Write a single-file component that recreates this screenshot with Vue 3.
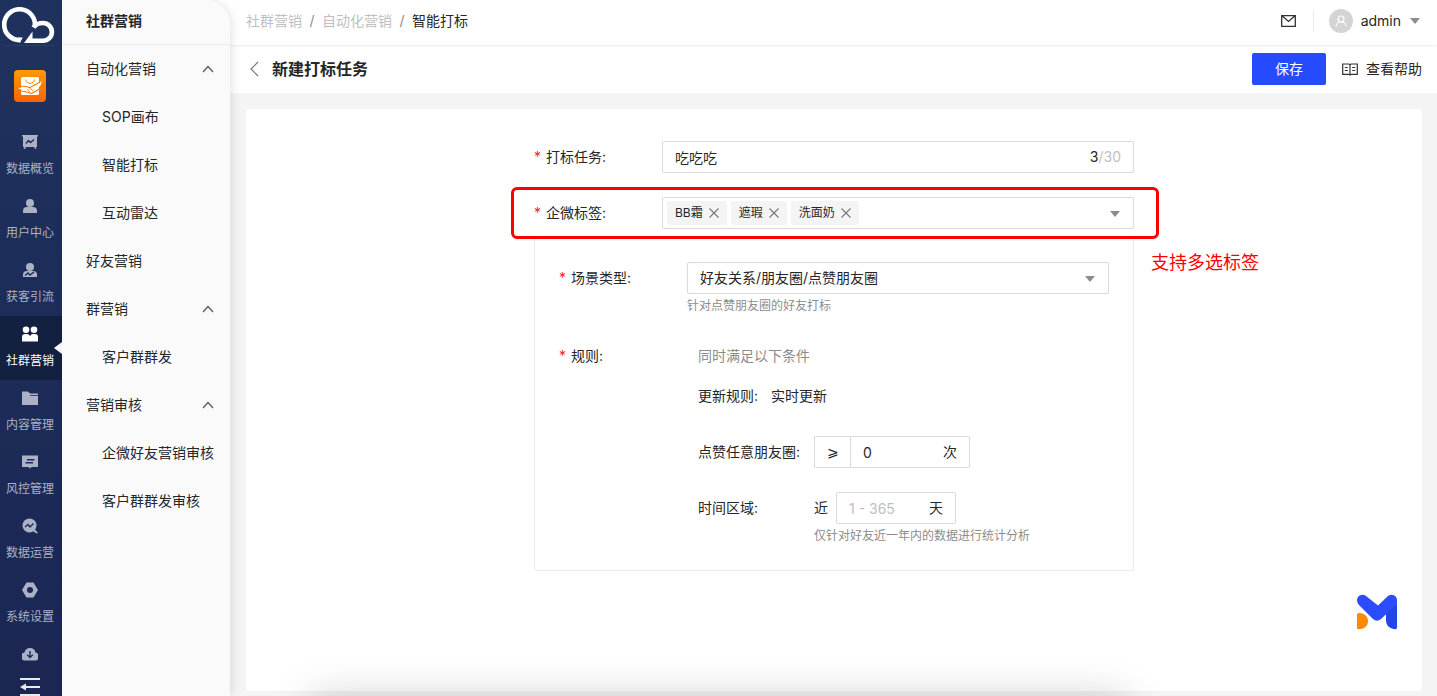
<script setup>
import { ref } from 'vue'

const navItems = [
  { key: 'overview', label: '数据概览' },
  { key: 'user', label: '用户中心' },
  { key: 'acquire', label: '获客引流' },
  { key: 'community', label: '社群营销', active: true },
  { key: 'content', label: '内容管理' },
  { key: 'risk', label: '风控管理' },
  { key: 'operation', label: '数据运营' },
  { key: 'setting', label: '系统设置' },
  { key: 'download', label: '' },
]

const menu = [
  { label: '自动化营销', children: ['SOP画布', '智能打标', '互动雷达'] },
  { label: '好友营销' },
  { label: '群营销', children: ['客户群群发'] },
  { label: '营销审核', children: ['企微好友营销审核', '客户群群发审核'] },
]

const taskName = ref('吃吃吃')
const tags = ref(['BB霜', '遮瑕', '洗面奶'])
const scene = ref('好友关系/朋友圈/点赞朋友圈')
const likes = ref('0')
const days = ref('')

const removeTag = (tag) => {
  tags.value = tags.value.filter((t) => t !== tag)
}
</script>

<template>
  <div class="app">
    <nav class="rail">
      <div class="brand">
        <svg width="58" height="46" viewBox="0 0 58 46" fill="none">
          <path d="M20.500 40A15.400 15.400 0 1 1 34.800 27" stroke="#fff" stroke-width="4.600" />
          <path d="M33.500 27.500C36 23.800 39.500 23 43 23A8.900 8.900 0 0 1 43 40.800H28" stroke="#fff" stroke-width="4.600" />
          <path d="M24 43.100L32.500 31.500V43.100Z" fill="#fff" />
          <path d="M16 42L18 37.600L22.800 37.600L20 42.500Z" fill="#fff" />
        </svg>
      </div>
      <a class="workspace" href="#" aria-label="工作台">
        <svg width="32" height="32" viewBox="0 0 32 32">
          <defs>
            <linearGradient id="ws" x1="0" y1="0" x2="0" y2="1">
              <stop offset="0" stop-color="#ff9a05" />
              <stop offset="1" stop-color="#ff6200" />
            </linearGradient>
          </defs>
          <rect width="32" height="32" rx="4" fill="url(#ws)" />
          <path d="M8.500 7H23.500Q25 7 25 8.500V23.500Q25 25 23.500 25H8.500Q7 25 7 23.500V8.500Q7 7 8.500 7Z" fill="#fff" />
          <path d="M11.500 9.500C12 14.500 20 14.500 20.500 9.500" fill="none" stroke="#ff8500" stroke-width="1" />
          <path d="M5 16.200C10 16.500 13 15.500 16 18C19 15 24 14.500 26 11.500M5 20.500C10 22 13 21 17 23.500C21 22 25 20 27 17" fill="none" stroke="#ff7a00" stroke-width="1.200" />
          <path d="M4 18C8 17.800 12 16.500 16 18.500C19 15.500 25 15.500 27.500 10.500C28 16.500 23 19 18 22C14 20 8 20.500 4 18Z" fill="#fff" />
          <path d="M13 19L16 21.500M15.500 18L19.500 21" stroke="#ff7500" stroke-width=".8" />
        </svg>
      </a>
      <a v-for="item in navItems" :key="item.key" href="#" class="nav-item" :class="{ active: item.active }">
        <svg width="16" height="16" viewBox="0 0 16 16" fill="currentColor">
          <template v-if="item.key === 'overview'">
            <path d="M0 1H16V2.500H15V13H13.500L14.500 15H13L12 13H4L3 15H1.500L2.500 13H1V2.500H0Z" />
            <path class="cut" d="M4 9.500L6.500 6.500L8.500 8.500L12 5.500" />
          </template>
          <template v-else-if="item.key === 'user'">
            <circle cx="8" cy="5" r="4" />
            <path d="M1 15V13Q1 9 5 9H11Q15 9 15 13V15Z" />
          </template>
          <template v-else-if="item.key === 'acquire'">
            <circle cx="8" cy="5" r="4" />
            <path d="M1 15V13Q1 9 5 9H11Q15 9 15 13V15Z" />
            <path class="cut" d="M3 13.500L6 11L8 13L12 10" />
          </template>
          <template v-else-if="item.key === 'community'">
            <circle cx="4" cy="3.800" r="3.300" />
            <circle cx="12" cy="3.800" r="3.300" />
            <path d="M0 15.500V11Q0 8 3 8H5Q7 8 8 10Q9 8 11 8H13Q16 8 16 11V15.500Z" />
          </template>
          <template v-else-if="item.key === 'content'">
            <path d="M0 1.500H6L8 3.500H16V15H0Z" />
            <path d="M8 5.500H16" stroke="#1d2c5b" stroke-width=".8" />
          </template>
          <template v-else-if="item.key === 'risk'">
            <path d="M0 1.500H16V13H9.500L8 14.500L6.500 13H0Z" />
            <path class="cut" d="M5 5.800H12.500M3.500 8.800H11" />
          </template>
          <template v-else-if="item.key === 'operation'">
            <circle cx="7.500" cy="7.500" r="7" />
            <path d="M11 13L13 11.500L16 15L14.500 15.500Z" />
            <path class="cut" d="M3 9L6 6.500L8 9L11.500 5.500" />
          </template>
          <template v-else-if="item.key === 'setting'">
            <path d="M4.500 .5H11.500L16 8L11.500 15.500H4.500L0 8Z" />
            <circle cx="8" cy="8" r="3" fill="#1b2855" />
          </template>
          <template v-else>
            <path d="M4 14.500A4 4 0 0 1 2.500 6.500A5.600 5.600 0 0 1 13.500 6.500A4 4 0 0 1 12 14.500Z" />
            <path class="cut" d="M8 5V11.500M5.200 8.800L8 11.500L10.800 8.800" />
          </template>
        </svg>
        <span>{{ item.label }}</span>
      </a>
      <button class="collapse" aria-label="收起">
        <svg width="20" height="18" viewBox="0 0 20 18" fill="#e8eaf0">
          <path d="M0 0H20V2H0ZM0 16H20V18H0ZM0 9L6 5.500V8H20V10H6V12.500Z" />
        </svg>
      </button>
    </nav>

    <aside class="submenu">
      <h2>社群营销</h2>
      <template v-for="group in menu" :key="group.label">
        <a href="#" class="menu-row">
          {{ group.label }}
          <svg v-if="group.children" width="12" height="8" viewBox="0 0 12 8" fill="none" stroke="#555" stroke-width="1.200">
            <path d="M1 7L6 1.500L11 7" />
          </svg>
        </a>
        <a v-for="child in group.children" :key="child" href="#" class="menu-row child">{{ child }}</a>
      </template>
    </aside>

    <div class="main">
      <header class="topbar">
        <div class="crumbs">
          <a href="#">社群营销</a><i>/</i><a href="#">自动化营销</a><i>/</i><span>智能打标</span>
        </div>
        <div class="account">
          <button class="mail" aria-label="消息">
            <svg width="15" height="12" viewBox="0 0 15 12" fill="none" stroke="#333" stroke-width="1.300">
              <path d="M.7 .7H14.300V11.300H.7ZM1.500 1.200L7.500 6.500L13.500 1.200" />
            </svg>
          </button>
          <button class="user">
            <svg width="24" height="24" viewBox="0 0 24 24" fill="none" stroke="#fff" stroke-width="1.200">
              <circle cx="12" cy="12" r="12" fill="#d4d4d4" stroke="none" />
              <circle cx="12" cy="10" r="3" />
              <path d="M7 17.500C7 11.500 17 11.500 17 17.500" />
            </svg>
            <span>admin</span>
            <svg class="user-caret" width="10" height="6" viewBox="0 0 10 6"><path d="M0 0H10L5 6Z" fill="#8c8c8c" /></svg>
          </button>
        </div>
      </header>

      <div class="titlebar">
        <button class="back" aria-label="返回">
          <svg width="9" height="16" viewBox="0 0 9 16" fill="none" stroke="#777" stroke-width="1.200"><path d="M8 1L1 8L8 15" /></svg>
        </button>
        <h1>新建打标任务</h1>
        <button class="save">保存</button>
        <a class="help" href="#">
          <svg width="16" height="13" viewBox="0 0 16 13" fill="none" stroke="#333" stroke-width="1.200">
            <path d="M.7 1H6.500Q8 1 8 2Q8 1 9.500 1H15.300V11.300H9.500Q8 11.300 8 12.500Q8 11.300 6.500 11.300H.7ZM8 2V12" />
            <path d="M2.800 4.500H5.800M2.800 7.500H5.800M10.200 4.500H13.200M10.200 7.500H13.200" />
          </svg>
          查看帮助
        </a>
      </div>

      <main class="card">
        <form class="form" @submit.prevent>
          <div class="row">
            <label class="label required" for="task">打标任务<b>:</b></label>
            <div class="box">
              <input id="task" v-model="taskName" maxlength="30" />
              <span class="count"><em>{{ taskName.length }}</em>/30</span>
            </div>
          </div>

          <div class="row marked">
            <label class="label required" for="tags">企微标签<b>:</b></label>
            <div class="box tags">
              <span v-for="tag in tags" :key="tag" class="tag">
                {{ tag }}
                <button type="button" :aria-label="'移除' + tag" @click="removeTag(tag)">
                  <svg width="10" height="10" viewBox="0 0 10 10" stroke="#777" stroke-width="1.100"><path d="M.5 .5L9.500 9.500M9.500 .5L.5 9.500" /></svg>
                </button>
              </span>
              <input id="tags" class="tag-input" />
              <svg class="caret" width="10" height="6" viewBox="0 0 10 6"><path d="M0 0H10L5 6Z" fill="#8c8c8c" /></svg>
            </div>
            <p class="note">支持多选标签</p>
          </div>

          <section class="panel">
            <div class="row">
              <label class="label required" for="scene">场景类型<b>:</b></label>
              <div class="box">
                <select id="scene" v-model="scene">
                  <option>好友关系/朋友圈/点赞朋友圈</option>
                </select>
                <svg class="caret" width="10" height="6" viewBox="0 0 10 6"><path d="M0 0H10L5 6Z" fill="#8c8c8c" /></svg>
              </div>
            </div>
            <p class="hint scene-hint">针对点赞朋友圈的好友打标</p>

            <div class="row rules-row">
              <span class="label required">规则<b>:</b></span>
              <div class="rules">
                <p class="muted">同时满足以下条件</p>
                <p class="update"><span>更新规则<b>:</b></span><span>实时更新</span></p>
                <div class="rule">
                  <label class="rule-label" for="likes">点赞任意朋友圈<b>:</b></label>
                  <span class="operator">⩾</span>
                  <div class="box number joined">
                    <input id="likes" v-model="likes" /><span>次</span>
                  </div>
                </div>
                <div class="rule">
                  <label class="rule-label" for="days">时间区域<b>:</b></label>
                  <span class="near">近</span>
                  <div class="box number">
                    <input id="days" v-model="days" placeholder="1 - 365" /><span>天</span>
                  </div>
                </div>
                <p class="hint rule-hint">仅针对好友近一年内的数据进行统计分析</p>
              </div>
            </div>
          </section>
        </form>
      </main>
    </div>

    <button class="assistant" aria-label="助手">
      <svg width="42" height="36" viewBox="0 0 42 36">
        <path d="M30 18L41 8V33.500Q41 35.500 39 35.300C33 34.500 30 31 30 26Z" fill="#2245ea" />
        <path d="M1 6A5.500 5.500 0 0 1 10 2L22 11.500L32 2A5.500 5.500 0 0 1 41 6V10L25 25Q21 28.500 17 25L3 11Q1 9 1 6Z" fill="#2b4dff" />
        <path d="M1 21Q1 19 3 19C9 19 12 23 12 27C12 32 8 36 1 35Z" fill="#ff8a00" />
      </svg>
    </button>
    <div class="bottom-shade"></div>
  </div>
</template>

<style>
body {
  overflow: hidden;
}
</style>

<style scoped>
.app {
  display: flex;
  height: 100vh;
  overflow: hidden;
  position: relative;
  background: #f4f4f4;
  color: #262626;
  font: 14px/22px Inter, "Noto Sans CJK SC", sans-serif;
}
.app * {
  box-sizing: border-box;
}
h1, h2, p {
  margin: 0;
}
a {
  color: inherit;
  text-decoration: none;
}
button, input, select {
  font: inherit;
  color: inherit;
  border: 0;
  padding: 0;
  margin: 0;
  background: none;
  outline: none;
}
button {
  cursor: pointer;
}
svg {
  display: block;
  flex: none;
}
b, i, em {
  font-weight: 400;
  font-style: normal;
}
b {
  margin-right: 10px;
}

.rail {
  position: relative;
  flex: none;
  width: 62px;
  overflow: hidden;
  background: linear-gradient(#1f325e, #1b2653);
}
.brand {
  width: 58px;
  height: 46px;
}
.brand::after {
  content: "";
  display: block;
  width: 48px;
  height: 1px;
  margin: -1px 6px 0;
  background: #2c3d69;
}
.workspace {
  display: block;
  margin: 24px 16px 22px 14px;
}
.nav-item {
  position: relative;
  display: flex;
  flex-direction: column;
  align-items: center;
  height: 64px;
  padding: 10px 2px 0 0;
  gap: 9px;
  font-size: 12px;
  line-height: 20px;
  color: #abb2c6;
}
.nav-item.active {
  background: #142040;
  color: #fff;
}
.nav-item.active::after {
  content: "";
  position: absolute;
  right: 0;
  top: 26px;
  border: 6px solid transparent;
  border-left: 0;
  border-right: 8px solid #fafafa;
}
.cut {
  fill: none;
  stroke: #1d2c5b;
  stroke-width: 1.4;
}
.collapse {
  position: absolute;
  left: 0;
  bottom: 0;
  width: 62px;
  height: 30px;
  padding: 12px 20px 0;
  background: #1b2653;
}

.submenu {
  position: relative;
  z-index: 2;
  flex: none;
  width: 168px;
  background: #fafafa;
  border-top-right-radius: 24px;
  box-shadow: 2px 0 10px rgba(0, 0, 0, 0.1);
}
.submenu h2 {
  height: 45px;
  padding: 0 24px;
  border-bottom: 1px solid #ececec;
  font-size: 14px;
  font-weight: 600;
  line-height: 42px;
}
.menu-row {
  display: flex;
  align-items: center;
  justify-content: space-between;
  height: 48px;
  padding: 0 16px 0 24px;
}
.menu-row.child {
  padding-left: 40px;
  padding-right: 0;
}

.main {
  flex: 1;
  min-width: 0;
  display: flex;
  flex-direction: column;
  margin-left: -24px;
}
.topbar {
  position: relative;
  z-index: 1;
  display: flex;
  align-items: center;
  justify-content: space-between;
  height: 45px;
  padding: 0 17px 3px 40px;
  background: #fff;
  box-shadow: 0 1px 2px rgba(0, 0, 0, 0.08);
}
.crumbs {
  display: flex;
}
.crumbs a {
  color: #bfbfbf;
}
.crumbs i {
  width: 20px;
  text-align: center;
  color: #8c8c8c;
}
.account, .user {
  display: flex;
  align-items: center;
}
.mail {
  padding-right: 17px;
  margin-right: 15px;
  height: 22px;
  border-right: 1px solid #ececec;
}
.user {
  gap: 8px;
}
.user-caret {
  margin-left: 1px;
}
.titlebar {
  display: flex;
  align-items: center;
  height: 48px;
  padding: 0 15px 0 44px;
  background: #fff;
}
.titlebar h1 {
  margin: 0 auto 0 13px;
  font-size: 16px;
  line-height: 24px;
  font-weight: 600;
}
.save {
  width: 74px;
  height: 32px;
  border-radius: 2px;
  background: #264bff;
  color: #fff;
}
.help {
  display: flex;
  align-items: center;
  gap: 8px;
  margin-left: 16px;
}
.card {
  flex: 1;
  margin: 16px 15px 5px 40px;
  padding: 32px;
  background: #fff;
  border-radius: 4px;
}
.form {
  max-width: 600px;
  margin: 0 auto;
}
.row {
  position: relative;
  display: grid;
  grid-template-columns: 128px 1fr;
  align-items: center;
}
.label {
  display: flex;
}
.required::before {
  content: "*";
  width: 12px;
  color: #f5222d;
}
.box {
  position: relative;
  display: flex;
  align-items: center;
  height: 32px;
  padding: 0 12px;
  border: 1px solid #d9d9d9;
  border-radius: 2px;
  background: #fff;
}
.box input, .box select {
  flex: 1;
  width: 100%;
  min-width: 0;
  height: 30px;
  appearance: none;
}
.caret {
  position: absolute;
  right: 13px;
  top: 13px;
  pointer-events: none;
}
.count {
  color: #bfbfbf;
}
.count em {
  color: #262626;
}
.marked {
  margin-top: 24px;
  z-index: 1;
}
.marked::after {
  content: "";
  position: absolute;
  inset: -10px -25px -10px -23px;
  border: 3px solid #f00;
  border-radius: 6px;
  pointer-events: none;
}
.box.tags {
  gap: 4px;
  padding: 0 4px;
}
.tag {
  display: flex;
  align-items: center;
  gap: 6px;
  height: 24px;
  padding: 0 8px;
  border-radius: 2px;
  background: #f4f4f4;
  font-size: 12px;
  white-space: nowrap;
}
.note {
  position: absolute;
  left: calc(100% + 17px);
  top: 54px;
  color: #f00;
  font-size: 18px;
  line-height: 24px;
  white-space: nowrap;
}
.panel {
  margin-top: 8px;
  padding: 24px 24px 22px;
  border: 1px solid #ececec;
  border-radius: 2px;
}
.hint {
  font-size: 12px;
  line-height: 24px;
  color: #8c8c8c;
}
.scene-hint {
  padding-left: 128px;
}
.rules-row {
  margin-top: 27px;
  align-items: start;
}
.rules {
  padding-left: 11px;
}
.muted {
  color: #8c8c8c;
}
.update {
  display: flex;
  gap: 3px;
  margin: 18px 0 29px;
}
.rule {
  display: flex;
  align-items: center;
}
.rule + .rule {
  margin-top: 24px;
}
.rule-label {
  width: 116px;
}
.operator {
  width: 36px;
  height: 32px;
  border: 1px solid #d9d9d9;
  border-right: 0;
  border-radius: 2px 0 0 2px;
  line-height: 30px;
  text-align: center;
}
.number {
  width: 120px;
}
.joined {
  border-radius: 0 2px 2px 0;
}
.near {
  margin-right: 8px;
}
.number input::placeholder {
  color: #bfbfbf;
  opacity: 1;
}
.rule-hint {
  padding-left: 116px;
}
.assistant {
  position: absolute;
  right: 39px;
  bottom: 66px;
}
.bottom-shade {
  position: absolute;
  left: 310px;
  right: 310px;
  top: 100%;
  height: 40px;
  box-shadow: 0 0 40px rgba(0, 0, 0, 0.18);
}
</style>
